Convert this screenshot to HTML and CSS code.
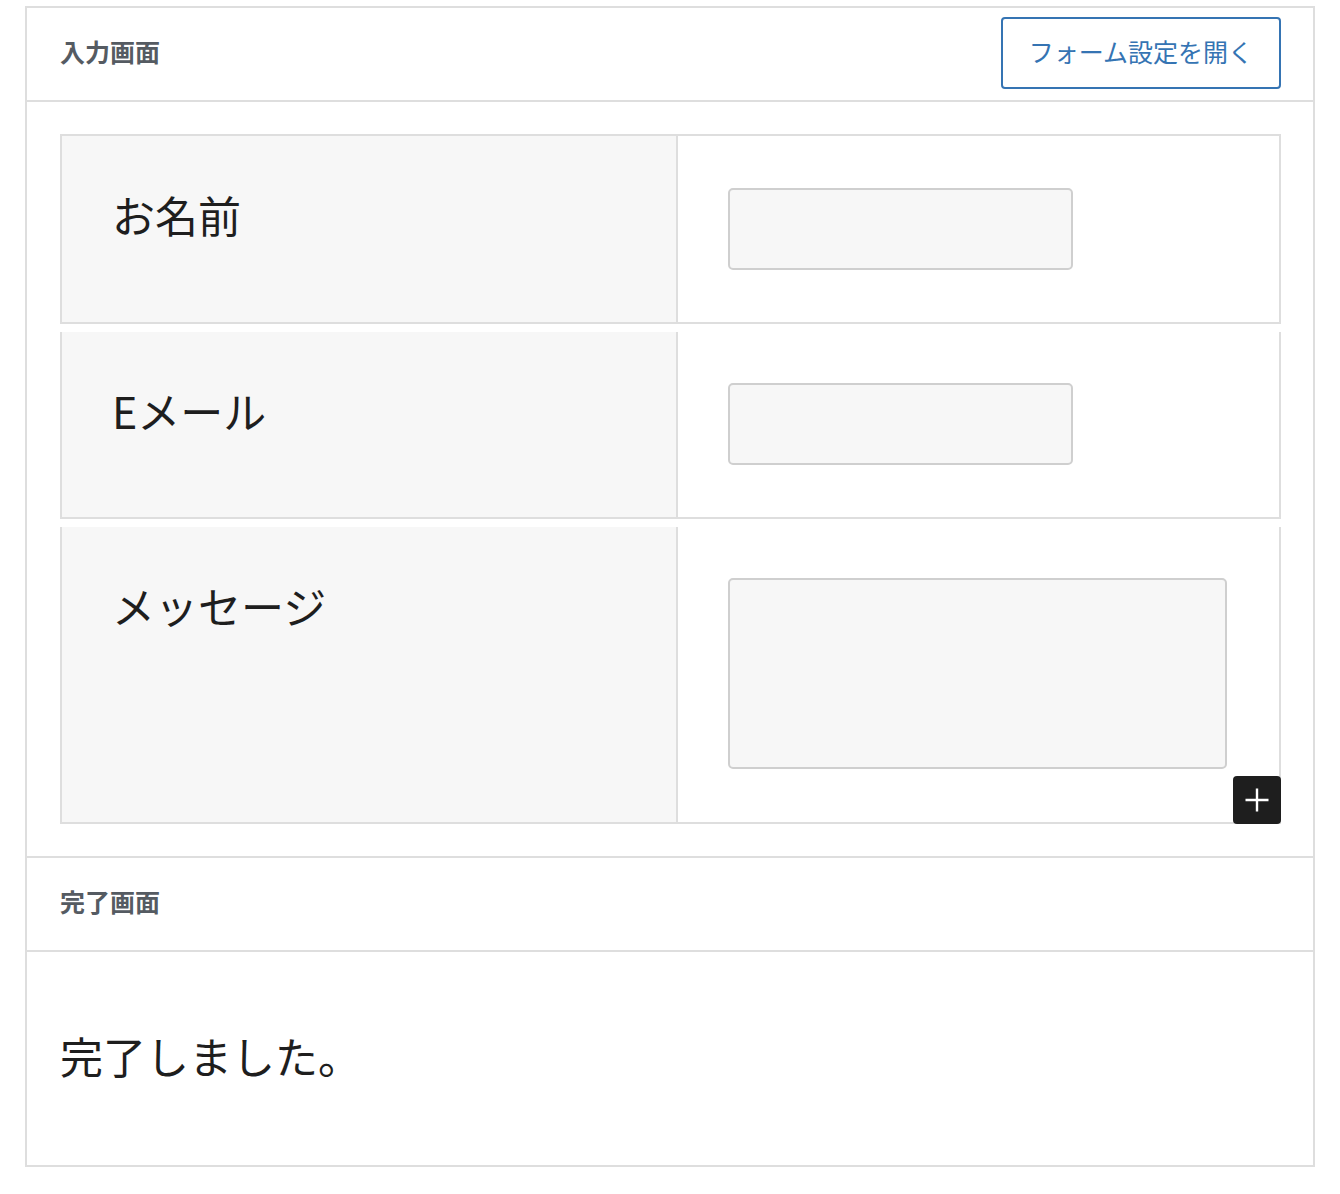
FILE: index.html
```html
<!DOCTYPE html>
<html lang="ja">
<head>
<meta charset="utf-8">
<title>フォーム</title>
<link rel="stylesheet" href="styles.css">
</head>
<body>
<div class="panel">
  <section class="section">
    <header class="section-head">
      <h2 class="section-title">入力画面</h2>
      <button class="open-btn" type="button">フォーム設定を開く</button>
    </header>
    <div class="section-body form-body">
      <div class="row row-first">
        <div class="label-cell">お名前</div>
        <div class="field-cell"><div class="input"></div></div>
      </div>
      <div class="row">
        <div class="label-cell">Eメール</div>
        <div class="field-cell"><div class="input"></div></div>
      </div>
      <div class="row row-last">
        <div class="label-cell">メッセージ</div>
        <div class="field-cell"><div class="textarea"></div></div>
        <button class="appender" type="button" aria-label="追加">
          <svg width="24" height="24" viewBox="0 0 24 24"><path d="M12 0.5V23.5M0.5 12H23.5" stroke="#fff" stroke-width="2.4" fill="none"/></svg>
        </button>
      </div>
    </div>
  </section>
  <section class="section section-second">
    <header class="section-head">
      <h2 class="section-title">完了画面</h2>
    </header>
    <div class="section-body done-body">
      <p class="done-text">完了しました。</p>
    </div>
  </section>
</div>
</body>
</html>
```
FILE: styles.css
```css
* { box-sizing: border-box; }
html, body { margin: 0; padding: 0; background: #fff; }
body {
  font-family: "Noto Sans CJK JP", "Noto Sans", sans-serif;
  color: #1e1e1e;
}
.panel {
  margin: 6px 0 0 25px;
  width: 1290px;
  border: 2px solid #dedede;
}
.section-second { border-top: 2px solid #dedede; }
.section-head {
  height: 94px;
  border-bottom: 2px solid #dedede;
  display: flex;
  align-items: center;
  justify-content: space-between;
  padding: 0 32px 2px 33px;
}
.section-title {
  margin: 0;
  padding-bottom: 4px;
  font-size: 25px;
  font-weight: 700;
  color: #555b62;
  line-height: 1;
}
.open-btn {
  font-family: inherit;
  font-size: 25px;
  line-height: 1;
  color: #3574b3;
  background: #fff;
  border: 2px solid #3574b3;
  border-radius: 4px;
  height: 72px;
  padding: 0 26px 3px;
}
.form-body { padding: 32px 32px 32px 33px; }
.row {
  position: relative;
  display: grid;
  grid-template-columns: 614px 1fr;
  border: 2px solid #dedede;
  border-top: 0;
  margin-top: 8px;
}
.row-first { border-top: 2px solid #dedede; margin-top: 0; }
.label-cell {
  background: #f7f7f7;
  padding: 46px 50px 0;
  font-size: 43px;
  line-height: 1.5;
}
.field-cell {
  border-left: 2px solid #dedede;
  padding: 51px 52px 52px 50px;
}
.row-first .field-cell { padding-top: 52px; }
.row-last .field-cell { padding-bottom: 53px; }
.input {
  width: 345px;
  height: 82px;
  background: #f7f7f7;
  border: 2px solid #cfcfcf;
  border-radius: 5px;
}
.textarea {
  width: 499px;
  height: 191px;
  background: #f7f7f7;
  border: 2px solid #cfcfcf;
  border-radius: 5px;
}
.appender {
  position: absolute;
  right: -2px;
  bottom: -2px;
  width: 48px;
  height: 48px;
  padding: 0;
  border: 0;
  border-radius: 4px;
  background: #1e1e1e;
  display: flex;
  align-items: center;
  justify-content: center;
}
.appender svg { display: block; }
.done-body {
  height: 213px;
  display: flex;
  align-items: center;
  padding: 0 33px 6px;
}
.done-text {
  margin: 0;
  font-size: 43px;
  line-height: 1.5;
}
```
